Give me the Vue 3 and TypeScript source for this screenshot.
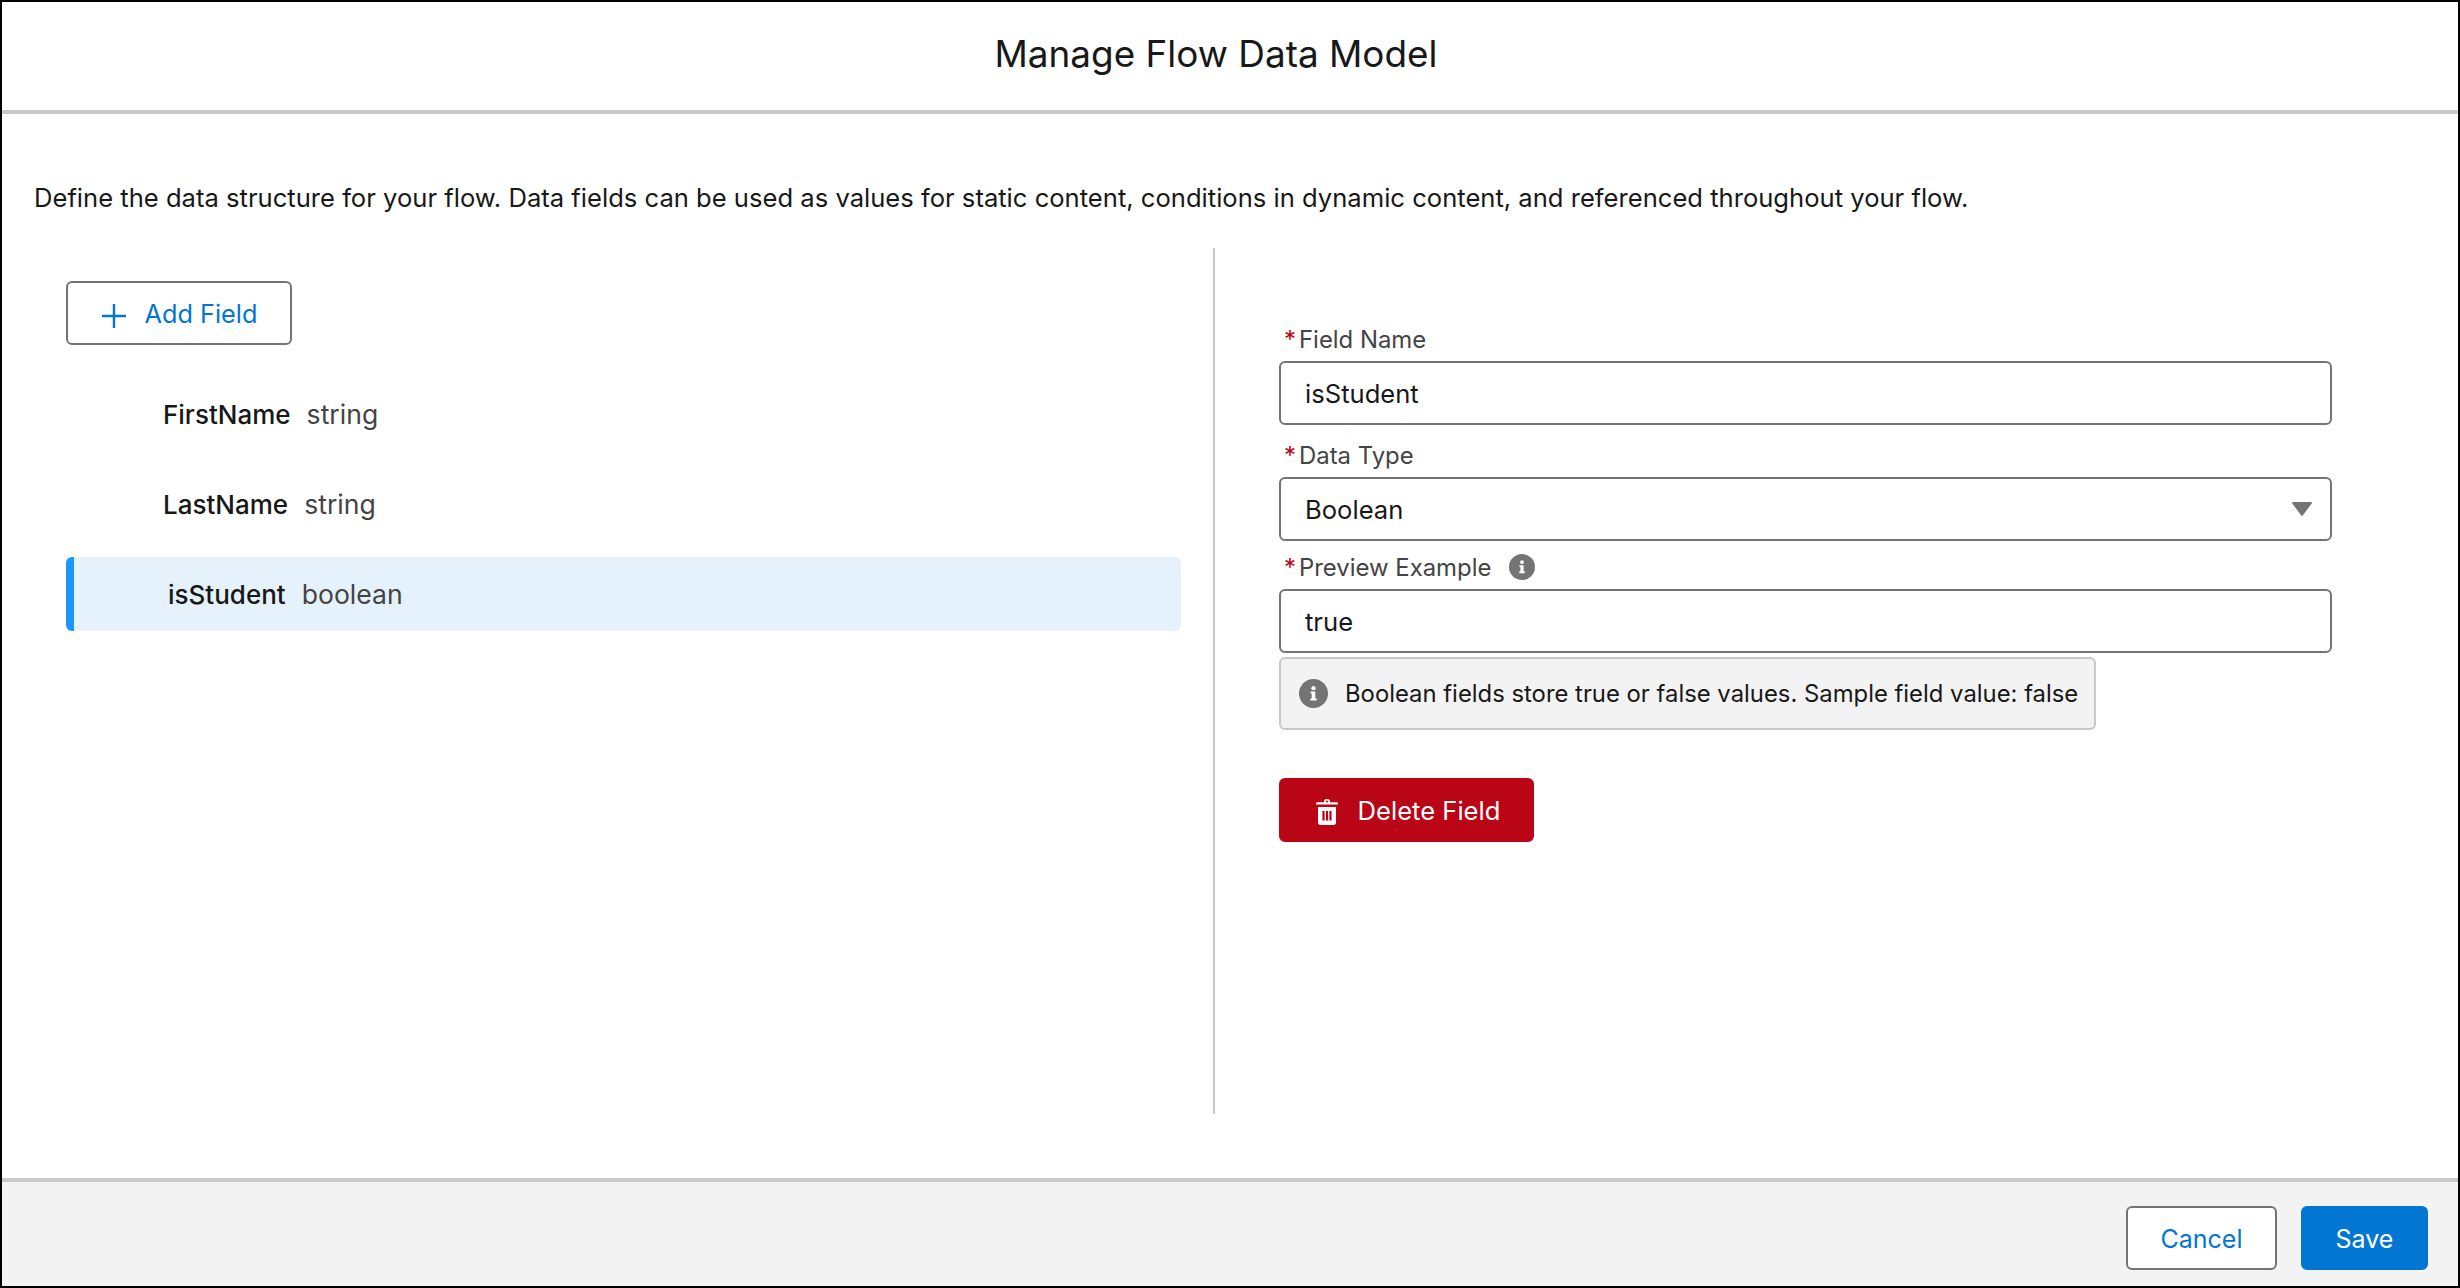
<script setup lang="ts">
interface DataField {
  name: string;
  type: string;
  selected?: boolean;
}

const fields: DataField[] = [
  { name: "FirstName", type: "string" },
  { name: "LastName", type: "string" },
  { name: "isStudent", type: "boolean", selected: true },
];
</script>

<template>
  <div class="modal">
    <header class="modal-header">
      <h1 class="modal-title">Manage Flow Data Model</h1>
    </header>

    <main class="modal-body">
      <p class="intro">
        Define the data structure for your flow. Data fields can be used as values for static content, conditions in dynamic content, and referenced throughout your flow.
      </p>

      <div class="columns">
        <section class="field-list">
          <button class="btn btn-add" type="button">
            <svg class="plus-icon" viewBox="0 0 24 24" aria-hidden="true">
              <path d="M12 0v24M0 12h24" fill="none" stroke="currentColor" stroke-width="2.4" />
            </svg>
            Add Field
          </button>
          <ul class="rows">
            <li
              v-for="field in fields"
              :key="field.name"
              class="row"
              :class="{ selected: field.selected }"
            >
              <span class="row-name">{{ field.name }}</span>
              <span class="row-type">{{ field.type }}</span>
            </li>
          </ul>
        </section>

        <section class="field-form">
          <div class="field field-first">
            <label class="field-label"><abbr class="req">*</abbr>Field Name</label>
            <input class="field-input" type="text" value="isStudent" readonly />
          </div>
          <div class="field field-second">
            <label class="field-label"><abbr class="req">*</abbr>Data Type</label>
            <div class="field-input field-select">
              <span>Boolean</span>
              <svg class="caret" viewBox="0 0 20 14" aria-hidden="true">
                <path d="M1 0h18c.8 0 1.2.9.7 1.5l-9 12c-.4.5-1 .5-1.4 0l-9-12C-.2.9.2 0 1 0z" fill="#747474" />
              </svg>
            </div>
          </div>
          <div class="field">
            <label class="field-label">
              <abbr class="req">*</abbr>Preview Example
              <svg class="info-icon info-label" viewBox="0 0 26 26" aria-hidden="true">
                <circle cx="13" cy="13" r="13" fill="#747474" />
                <circle cx="13" cy="8.2" r="1.9" fill="#fff" />
                <path d="M10.4 11.2h4.2v6.2h1.2v1.9h-5.600v-1.900h1.200v-4.300h-1z" fill="#fff" />
              </svg>
            </label>
            <input class="field-input" type="text" value="true" readonly />
          </div>
          <div class="note">
            <svg class="info-icon info-note" viewBox="0 0 26 26" aria-hidden="true">
              <circle cx="13" cy="13" r="13" fill="#747474" />
              <circle cx="13" cy="8.2" r="1.9" fill="#fff" />
              <path d="M10.4 11.2h4.2v6.2h1.2v1.9h-5.600v-1.900h1.200v-4.300h-1z" fill="#fff" />
            </svg>
            <span>Boolean fields store true or false values. Sample field value: false</span>
          </div>
          <button class="btn btn-danger" type="button">
            <svg class="trash-icon" viewBox="0 0 22 26" aria-hidden="true">
              <path d="M8 3.2V2.4C8 1.1 9 0 10.3 0h1.4C13 0 14 1.1 14 2.4v.8h6.600c.8 0 1.400.6 1.400 1.400v1H0v-1c0-.8.6-1.400 1.400-1.400zM9.800 3.200h2.400v-.8c0-.3-.2-.6-.5-.6h-1.400c-.3 0-.5.3-.5.6z" fill="#fff" />
              <path fill-rule="evenodd" d="M2 8h18v15.600c0 1.300-1 2.400-2.300 2.400H4.300C3 26 2 24.900 2 23.600zM6.400 12v9.500h2.200V12zM9.900 12v9.500h2.200V12zM13.400 12v9.500h2.200V12z" fill="#fff" />
            </svg>
            Delete Field
          </button>
        </section>
      </div>
    </main>

    <footer class="modal-footer">
      <button class="btn btn-cancel" type="button">Cancel</button>
      <button class="btn btn-save" type="button">Save</button>
    </footer>
  </div>
</template>

<style>
html,
body {
  margin: 0;
  background: #fff;
}
</style>

<style scoped>
.modal {
  box-sizing: border-box;
  width: 2460px;
  height: 1288px;
  display: flex;
  flex-direction: column;
  border: 2px solid #000;
  background: #fff;
  color: #181818;
  font-family: Inter, "Liberation Sans", sans-serif;
  font-size: 25.6px;
}

.modal-header {
  flex: none;
  height: 108px;
  display: flex;
  align-items: center;
  justify-content: center;
  padding-right: 28px;
  border-bottom: 4px solid #c9c9c9;
}

.modal-title {
  margin: 0 0 3px;
  font-size: 36.9px;
  font-weight: 400;
  line-height: 1.2;
}

.modal-body {
  flex: 1;
  min-height: 0;
  padding: 66px 0 0 32px;
}

.intro {
  margin: 0;
  line-height: 36px;
  white-space: nowrap;
}

.columns {
  height: 866px;
  margin-top: 32px;
  display: grid;
  grid-template-columns: 1181px 1fr;
}

.field-list {
  padding: 33px 32px 0;
  border-right: 2px solid #c9c9c9;
}

.rows {
  list-style: none;
  margin: 32px 0 0;
  padding: 0;
  display: flex;
  flex-direction: column;
  gap: 16px;
}

.row {
  box-sizing: border-box;
  height: 74px;
  display: flex;
  align-items: center;
  gap: 16px;
  padding-left: 97px;
  border-radius: 6px;
}

.row.selected {
  padding-left: 94px;
  background: #e5f2fc;
  border-left: 8px solid #1b96ff;
}

.row-name {
  font-size: 26px;
  font-weight: 500;
}

.row-type {
  color: #444;
  font-size: 26.6px;
}

.field-form {
  padding: 71px 126px 0 64px;
}

.field-first {
  margin-bottom: 10px;
}

.field-second {
  margin-bottom: 6px;
}

.field-label {
  box-sizing: border-box;
  height: 42px;
  padding-bottom: 2px;
  display: flex;
  align-items: center;
  color: #444;
  font-size: 23.9px;
}

.req {
  width: 15px;
  margin-left: 5px;
  color: #ba0517;
  text-decoration: none;
}

.field-input {
  box-sizing: border-box;
  display: block;
  width: 100%;
  height: 64px;
  padding: 0 18px 0 24px;
  border: 2px solid #747474;
  border-radius: 6px;
  background: #fff;
  color: #181818;
  font: inherit;
  outline: none;
}

.field-select {
  display: flex;
  align-items: center;
  justify-content: space-between;
}

.caret {
  width: 20px;
  height: 14px;
}

.info-icon {
  flex: none;
}

.info-label {
  width: 26px;
  height: 26px;
  margin-left: 18px;
}

.info-note {
  width: 29px;
  height: 29px;
}

.note {
  box-sizing: border-box;
  width: 817px;
  height: 73px;
  margin-top: 4px;
  display: flex;
  align-items: center;
  gap: 17px;
  padding-left: 18px;
  border: 2px solid #c9c9c9;
  border-radius: 6px;
  background: #f3f3f3;
  font-size: 23.85px;
  white-space: nowrap;
}

.btn {
  box-sizing: border-box;
  height: 64px;
  display: inline-flex;
  align-items: center;
  justify-content: center;
  padding: 2px 0 0;
  border: 2px solid #747474;
  border-radius: 6px;
  background: #fff;
  color: #0176d3;
  font: inherit;
}

.btn-add {
  width: 226px;
  gap: 19px;
  padding: 0 0 0 1px;
  font-size: 25.3px;
}

.plus-icon {
  width: 24px;
  height: 24px;
  margin-top: 6px;
}

.btn-danger {
  width: 255px;
  margin-top: 48px;
  gap: 20px;
  padding: 1px 0 0 3px;
  border-color: #ba0517;
  background: #ba0517;
  color: #fff;
}

.trash-icon {
  width: 22px;
  height: 26px;
  margin-top: 2px;
}

.modal-footer {
  flex: none;
  height: 108px;
  box-sizing: border-box;
  display: flex;
  justify-content: flex-end;
  gap: 24px;
  padding: 24px 30px 0 0;
  border-top: 4px solid #c9c9c9;
  background: #f3f3f3;
}

.btn-cancel {
  width: 151px;
  font-size: 25px;
}

.btn-save {
  width: 127px;
  border-color: #0176d3;
  background: #0176d3;
  color: #fff;
  font-size: 25px;
}
</style>
